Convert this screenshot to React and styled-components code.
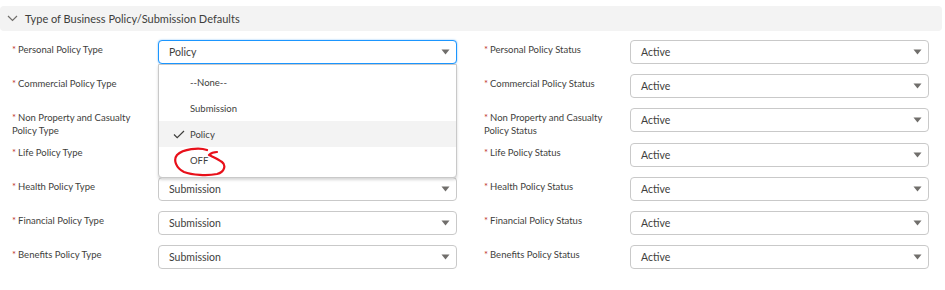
import React from "react";
import styled, { createGlobalStyle } from "styled-components";

const typeFields = [
  { label: "Personal Policy Type", value: "Policy", open: true },
  { label: "Commercial Policy Type", value: "" },
  { label: "Non Property and Casualty Policy Type", value: "", tall: true },
  { label: "Life Policy Type", value: "" },
  { label: "Health Policy Type", value: "Submission" },
  { label: "Financial Policy Type", value: "Submission" },
  { label: "Benefits Policy Type", value: "Submission" },
];

const statusFields = [
  "Personal Policy Status",
  "Commercial Policy Status",
  "Non Property and Casualty Policy Status",
  "Life Policy Status",
  "Health Policy Status",
  "Financial Policy Status",
  "Benefits Policy Status",
];

const options = ["--None--", "Submission", "Policy", "OFF"];

const Arrow = () => (
  <svg width="9" height="6" viewBox="0 0 9 6">
    <path d="M0.5 0.5 L8.5 0.5 L4.5 5.5 Z" fill="#706e6b" />
  </svg>
);

const App = () => {
  const rows = typeFields.map((f, i) => ({ type: f, status: statusFields[i] }));

  return (
    <>
      <GlobalStyle />
      <Page>
        <SectionHeader>
          <svg width="11" height="7" viewBox="0 0 11 7">
            <path d="M1 1 L5.5 5.5 L10 1" fill="none" stroke="#706e6b" strokeWidth="1.2" />
          </svg>
          <SectionTitle>Type of Business Policy/Submission Defaults</SectionTitle>
        </SectionHeader>

        <Form>
          {rows.map((r) => (
            <React.Fragment key={r.status}>
              <Field $tall={r.type.tall}>
                <Label>{r.type.label}</Label>
                <SelectWrap>
                  <Select $focused={r.type.open}>
                    <span>{r.type.value}</span>
                    <Arrow />
                  </Select>
                  {r.type.open && (
                    <Menu>
                      {options.map((o) => (
                        <Option key={o} $selected={o === r.type.value}>
                          {o === r.type.value && (
                            <Check width="12" height="9" viewBox="0 0 12 9">
                              <path d="M1 4.5 L4.2 7.7 L11 1" fill="none" stroke="#3e3e3c" strokeWidth="1.2" />
                            </Check>
                          )}
                          {o}
                          {o === "OFF" && (
                            <Scribble width="56" height="30" viewBox="0 0 56 30">
                              <path
                                d="M34 3 C26 0 10 2 4 8 C0 13 3 21 11 25 C19 28 34 29 44 27 C52 25 53 18 49 15 C45 12 40 10 36 8 C38 6 41 5 44 5"
                                fill="none"
                                stroke="#e8101a"
                                strokeWidth="2.2"
                                strokeLinecap="round"
                                strokeLinejoin="round"
                              />
                            </Scribble>
                          )}
                        </Option>
                      ))}
                    </Menu>
                  )}
                </SelectWrap>
              </Field>
              <Field $tall={r.type.tall}>
                <Label>{r.status}</Label>
                <SelectWrap>
                  <Select>
                    <span>Active</span>
                    <Arrow />
                  </Select>
                </SelectWrap>
              </Field>
            </React.Fragment>
          ))}
        </Form>
      </Page>
    </>
  );
};

export default App;

/* ================== STYLES ================== */
const GlobalStyle = createGlobalStyle`
  body {
    margin: 0;
    background: #ffffff;
    font-family: Lato, "Open Sans", sans-serif;
    color: #3e3e3c;
  }
`;

const Page = styled.div`
  width: 945px;
  height: 290px;
  padding-top: 6px;
  box-sizing: border-box;
`;

const SectionHeader = styled.div`
  display: flex;
  align-items: center;
  gap: 7px;
  height: 25px;
  margin-right: 3px;
  padding-left: 7px;
  background: #f3f3f3;
  border-radius: 4px;
`;

const SectionTitle = styled.span`
  font-size: 11px;
  color: #3e3e3c;
`;

const Form = styled.div`
  display: grid;
  grid-template-columns: 472px 473px;
  row-gap: 10px;
  margin-top: 9px;
`;

const Field = styled.div`
  display: flex;
  align-items: flex-start;
  height: ${(p) => (p.$tall ? "25px" : "24px")};
  padding-left: 12px;
`;

/* required marker drawn by ::before */
const Label = styled.div`
  width: 130px;
  padding: 4px 16px 0 0;
  font-size: 9.5px;
  line-height: 12.5px;
  color: #3e3e3c;

  &::before {
    content: "*";
    color: #c23934;
    margin-right: 2px;
  }
`;

const SelectWrap = styled.div`
  position: relative;
  width: 299px;
`;

const Select = styled.div`
  display: flex;
  align-items: center;
  justify-content: space-between;
  height: 24px;
  box-sizing: border-box;
  padding: 0 6px 0 10px;
  border: 1px solid ${(p) => (p.$focused ? "#1b96ff" : "#c9c9c9")};
  border-radius: 4px;
  box-shadow: ${(p) => (p.$focused ? "0 0 2px #7cbcf5" : "none")};
  background: #fff;
  font-size: 10.5px;
  color: #3e3e3c;
`;

const Menu = styled.div`
  position: absolute;
  top: 24px;
  left: 0;
  right: 0;
  z-index: 5;
  padding: 4px 0;
  background: #fff;
  border: 1px solid #c9c9c9;
  border-radius: 0 0 4px 4px;
  box-shadow: 0 2px 3px rgba(0, 0, 0, 0.16);
`;

const Option = styled.div`
  position: relative;
  display: flex;
  align-items: center;
  height: 26px;
  padding-left: 31px;
  font-size: 9.5px;
  color: #3e3e3c;
  background: ${(p) => (p.$selected ? "#f3f3f3" : "transparent")};
`;

const Check = styled.svg`
  position: absolute;
  left: 14px;
  top: 9px;
`;

const Scribble = styled.svg`
  position: absolute;
  left: 14px;
  top: 0;
`;
